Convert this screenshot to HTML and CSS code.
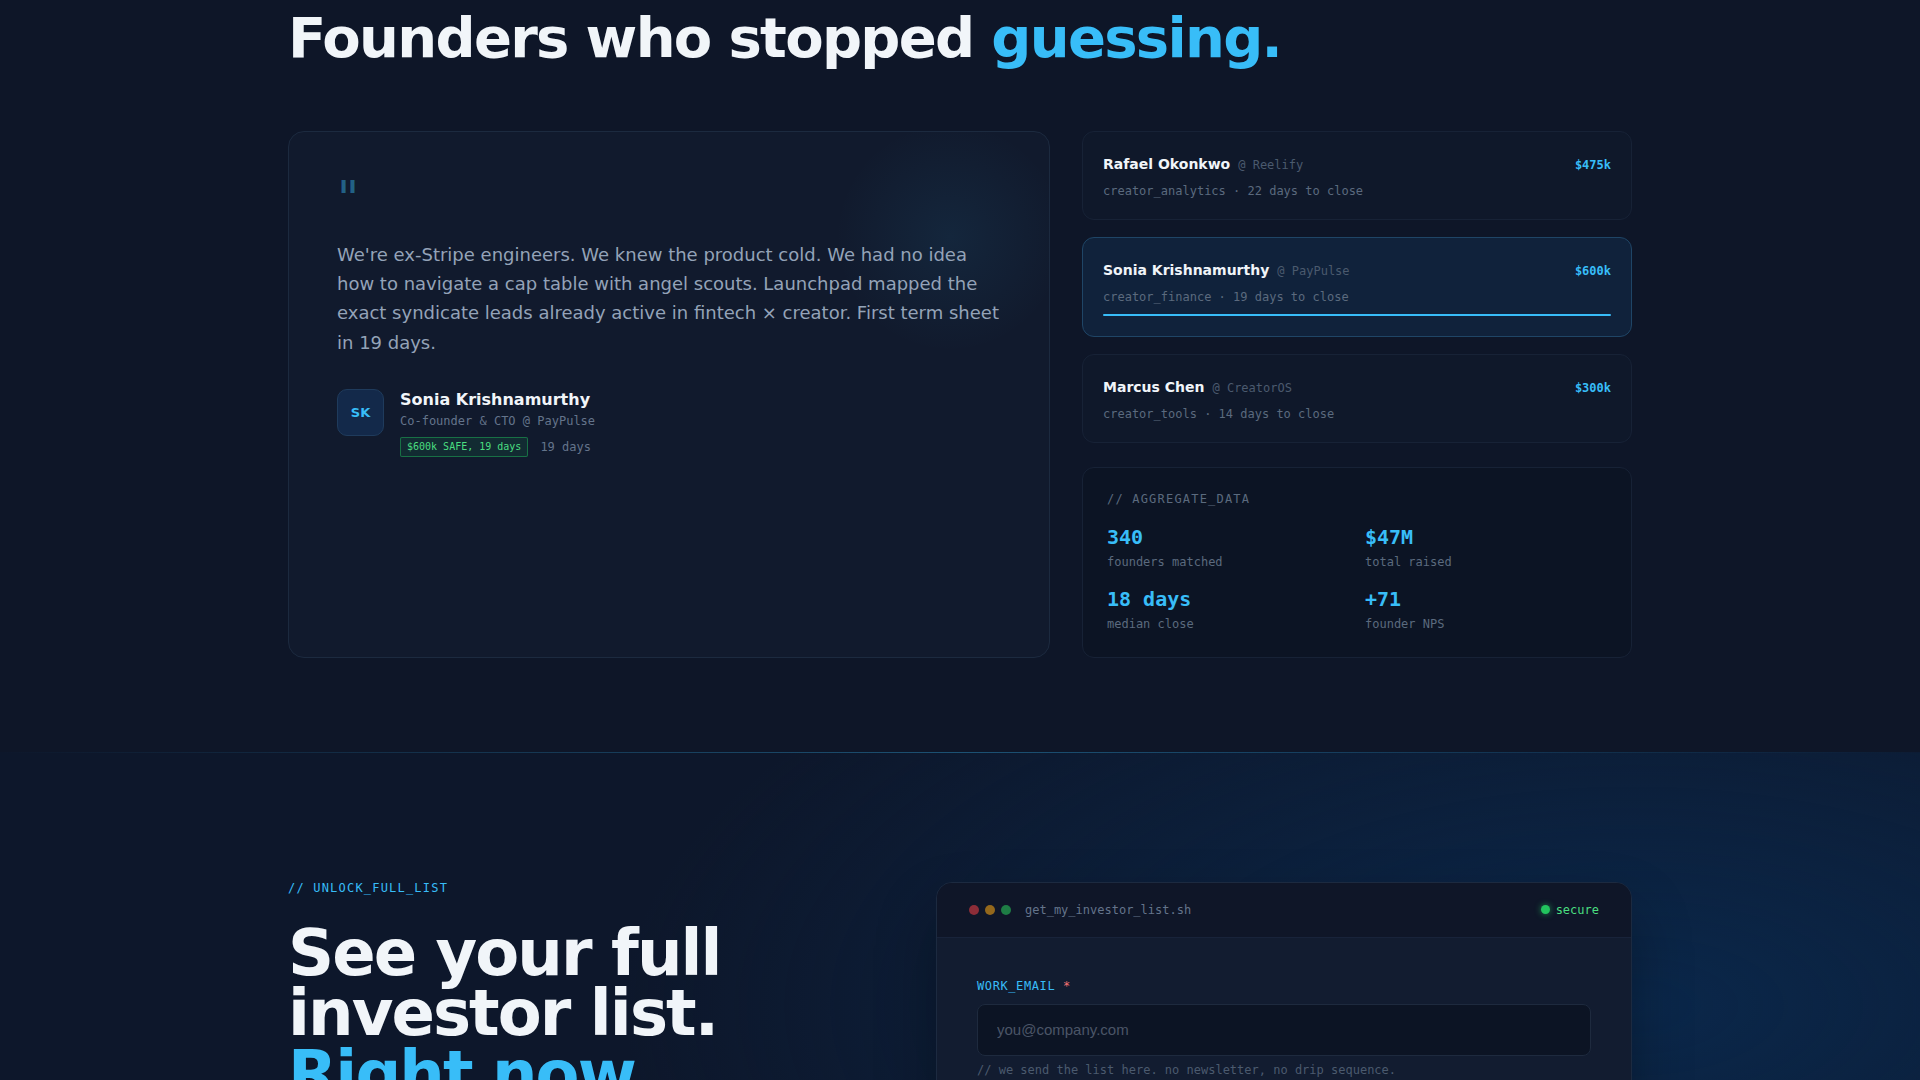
FILE: index.html
```html
<!DOCTYPE html>
<html lang="en">
<head>
<meta charset="utf-8">
<title>Launchpad — Founders who stopped guessing</title>
<link rel="stylesheet" href="styles.css">
</head>
<body>
<section class="proof">
  <div class="wrap">
    <h2 class="title">Founders who stopped <span class="accent">guessing.</span></h2>
    <div class="proof-grid">
      <article class="quote-card">
        <div class="quote-mark">"</div>
        <p class="quote-text">We're ex-Stripe engineers. We knew the product cold. We had no idea how to navigate a cap table with angel scouts. Launchpad mapped the exact syndicate leads already active in fintech × creator. First term sheet in 19 days.</p>
        <div class="author">
          <div class="avatar">SK</div>
          <div class="author-info">
            <div class="author-name">Sonia Krishnamurthy</div>
            <div class="author-role">Co-founder &amp; CTO @ PayPulse</div>
            <div class="author-meta"><span class="badge">$600k SAFE, 19 days</span><span class="meta-days">19 days</span></div>
          </div>
        </div>
      </article>
      <div class="side">
        <div class="deal">
          <div class="deal-top">
            <div class="deal-name">Rafael Okonkwo<span class="deal-co">@ Reelify</span></div>
            <div class="deal-amt">$475k</div>
          </div>
          <div class="deal-sub">creator_analytics · 22 days to close</div>
        </div>
        <div class="deal active">
          <div class="deal-top">
            <div class="deal-name">Sonia Krishnamurthy<span class="deal-co">@ PayPulse</span></div>
            <div class="deal-amt">$600k</div>
          </div>
          <div class="deal-sub">creator_finance · 19 days to close</div>
          <div class="deal-bar"></div>
        </div>
        <div class="deal">
          <div class="deal-top">
            <div class="deal-name">Marcus Chen<span class="deal-co">@ CreatorOS</span></div>
            <div class="deal-amt">$300k</div>
          </div>
          <div class="deal-sub">creator_tools · 14 days to close</div>
        </div>
        <div class="agg">
          <div class="agg-label">// AGGREGATE_DATA</div>
          <div class="agg-grid">
            <div class="stat"><div class="stat-num">340</div><div class="stat-lbl">founders matched</div></div>
            <div class="stat"><div class="stat-num">$47M</div><div class="stat-lbl">total raised</div></div>
            <div class="stat"><div class="stat-num">18 days</div><div class="stat-lbl">median close</div></div>
            <div class="stat"><div class="stat-num">+71</div><div class="stat-lbl">founder NPS</div></div>
          </div>
        </div>
      </div>
    </div>
  </div>
</section>
<section class="cta">
  <div class="wrap cta-grid">
    <div class="cta-left">
      <div class="eyebrow">// UNLOCK_FULL_LIST</div>
      <h2 class="cta-title">See your full<br>investor list.<br><span class="accent">Right now.</span></h2>
    </div>
    <div class="terminal">
      <div class="term-head">
        <span class="dot red"></span><span class="dot yellow"></span><span class="dot green"></span>
        <span class="file">get_my_investor_list.sh</span>
        <span class="secure"><span class="secure-dot"></span>secure</span>
      </div>
      <div class="term-body">
        <label class="field-label" for="email">WORK_EMAIL <span class="req">*</span></label>
        <input class="field-input" id="email" type="email" placeholder="you@company.com">
        <div class="field-help">// we send the list here. no newsletter, no drip sequence.</div>
        <button class="submit" type="button">./get_list --now</button>
      </div>
    </div>
  </div>
</section>
</body>
</html>
```

FILE: styles.css
```css
* { box-sizing: border-box; }

body {
  margin: 0;
  background: #0e1628;
  font-family: "DejaVu Sans", "Noto Sans", sans-serif;
  color: #f1f5f9;
}

.wrap {
  width: 1344px;
  margin: 0 auto;
}

.accent { color: #38bdf8; }

/* ---------- proof section ---------- */
.proof {
  padding: 7px 0 94px;
}

.title {
  margin: 0 0 62px;
  font-size: 56px;
  line-height: 1.1;
  font-weight: 700;
  letter-spacing: -0.03em;
  color: #f1f5f9;
}

.proof-grid {
  display: grid;
  grid-template-columns: 762px 1fr;
  gap: 32px;
}

.quote-card {
  border: 1px solid #1c2a3f;
  border-radius: 16px;
  background:
    radial-gradient(circle at 87% 20%, rgba(56, 189, 248, 0.075), rgba(56, 189, 248, 0) 115px),
    #111a2d;
  padding: 48px;
}

.quote-mark {
  font-size: 48px;
  line-height: 0.75;
  height: 36px;
  color: rgba(56, 189, 248, 0.45);
  font-family: "DejaVu Sans", sans-serif;
}

.quote-text {
  margin: 24px 0 0;
  font-size: 18px;
  line-height: 29.4px;
  color: #94a3b8;
}

.author {
  display: flex;
  align-items: flex-start;
  gap: 16px;
  margin-top: 32px;
}

.avatar {
  width: 47px;
  height: 47px;
  flex: none;
  border-radius: 10px;
  background: #13294a;
  border: 1px solid #1f3b5c;
  color: #38bdf8;
  font-weight: 700;
  font-size: 13px;
  display: flex;
  align-items: center;
  justify-content: center;
}

.author-name {
  font-size: 16px;
  line-height: 22px;
  font-weight: 700;
  color: #f1f5f9;
}

.author-role {
  font-family: "DejaVu Sans Mono", monospace;
  font-size: 12px;
  line-height: 16px;
  color: #64748b;
  margin-top: 2px;
}

.author-meta {
  display: flex;
  align-items: center;
  gap: 12px;
  margin-top: 8px;
}

.badge {
  font-family: "DejaVu Sans Mono", monospace;
  font-size: 10px;
  line-height: 18px;
  padding: 0 6px;
  color: #4ade80;
  background: rgba(34, 197, 94, 0.1);
  border: 1px solid rgba(34, 197, 94, 0.45);
  border-radius: 2px;
}

.meta-days {
  font-family: "DejaVu Sans Mono", monospace;
  font-size: 12px;
  color: #64748b;
}

.side {
  display: flex;
  flex-direction: column;
  gap: 17px;
}

.deal {
  border: 1px solid #172236;
  border-radius: 12px;
  background: #0f182a;
  padding: 20px;
}

.deal.active {
  background: #10223b;
  border-color: #1f4566;
}

.deal-top {
  display: flex;
  justify-content: space-between;
  align-items: baseline;
}

.deal-name {
  font-size: 14px;
  line-height: 24px;
  font-weight: 700;
  color: #f1f5f9;
}

.deal-co {
  font-family: "DejaVu Sans Mono", monospace;
  font-size: 12px;
  font-weight: 400;
  color: #4b5a6e;
  margin-left: 8px;
}

.deal-amt {
  font-family: "DejaVu Sans Mono", monospace;
  font-size: 12px;
  font-weight: 700;
  color: #38bdf8;
}

.deal-sub {
  font-family: "DejaVu Sans Mono", monospace;
  font-size: 12px;
  line-height: 16px;
  color: #5b6a7e;
  margin-top: 6px;
}

.deal-bar {
  height: 2px;
  margin-top: 9px;
  border-radius: 1px;
  background: #38bdf8;
}

.agg {
  margin-top: 7px;
  border: 1px solid #172236;
  border-radius: 12px;
  background: #0c1424;
  padding: 23px 24px 25px;
}

.agg-label {
  font-family: "DejaVu Sans Mono", monospace;
  font-size: 12px;
  line-height: 16px;
  letter-spacing: 0.1em;
  color: #5b6a7e;
  margin-bottom: 18px;
}

.agg-grid {
  display: grid;
  grid-template-columns: 1fr 1fr;
  column-gap: 16px;
  row-gap: 17px;
}

.stat-num {
  font-family: "DejaVu Sans Mono", monospace;
  font-size: 20px;
  line-height: 24px;
  font-weight: 700;
  color: #38bdf8;
}

.stat-lbl {
  font-family: "DejaVu Sans Mono", monospace;
  font-size: 12px;
  line-height: 16px;
  color: #5b6a7e;
  margin-top: 5px;
}

/* ---------- CTA section ---------- */
.cta {
  border-top: 1px solid transparent;
  border-image: linear-gradient(90deg, rgba(56, 189, 248, 0) 0%, rgba(56, 189, 248, 0.35) 50%, rgba(56, 189, 248, 0) 100%) 1;
  background:
    radial-gradient(ellipse 70% 110% at 85% 45%, rgba(10, 40, 76, 0.95) 0%, rgba(10, 40, 76, 0) 75%),
    #0d172b;
  padding: 127px 0 120px;
}

.cta-grid {
  display: grid;
  grid-template-columns: 1fr 696px;
  gap: 64px;
  align-items: start;
}

.eyebrow {
  font-family: "DejaVu Sans Mono", monospace;
  font-size: 12px;
  line-height: 16px;
  letter-spacing: 0.1em;
  color: #38bdf8;
  margin-bottom: 27px;
}

.cta-title {
  margin: 0;
  font-size: 64px;
  line-height: 0.95;
  font-weight: 700;
  letter-spacing: -0.03em;
  color: #f1f5f9;
}

.terminal {
  margin-top: 2px;
  border: 1px solid #1c2a40;
  border-radius: 16px;
  background: #121c30;
  overflow: hidden;
  box-shadow: 0 30px 60px rgba(0, 0, 0, 0.3);
}

.term-head {
  height: 55px;
  display: flex;
  align-items: center;
  padding: 0 32px;
  background: #0f1628;
  border-bottom: 1px solid #18233a;
}

.dot {
  width: 10px;
  height: 10px;
  border-radius: 50%;
  margin-right: 6px;
}

.dot.red { background: #8d2d38; }
.dot.yellow { background: #94681c; }
.dot.green { background: #1e7d45; }

.file {
  margin-left: 8px;
  font-family: "DejaVu Sans Mono", monospace;
  font-size: 12px;
  color: #64748b;
}

.secure {
  margin-left: auto;
  display: flex;
  align-items: center;
  gap: 6px;
  font-family: "DejaVu Sans Mono", monospace;
  font-size: 12px;
  color: #4ade80;
}

.secure-dot {
  width: 9px;
  height: 9px;
  border-radius: 50%;
  background: #22c55e;
  box-shadow: 0 0 6px rgba(34, 197, 94, 0.7);
}

.term-body {
  padding: 40px;
}

.field-label {
  display: block;
  font-family: "DejaVu Sans Mono", monospace;
  font-size: 12px;
  line-height: 16px;
  letter-spacing: 0.05em;
  color: #38bdf8;
  margin-bottom: 10px;
}

.req { color: #f87171; }

.field-input {
  display: block;
  width: 100%;
  height: 52px;
  background: #0c1424;
  border: 1px solid #1e2a3e;
  border-radius: 8px;
  padding: 0 19px;
  font-family: "Liberation Sans", Arial, sans-serif;
  font-size: 15px;
  color: #e2e8f0;
  outline: none;
}

.field-input::placeholder { color: #4b5567; }

.field-help {
  font-family: "DejaVu Sans Mono", monospace;
  font-size: 12px;
  line-height: 16px;
  color: #4b5a6e;
  margin-top: 6px;
}

.submit {
  margin-top: 24px;
  width: 100%;
  height: 52px;
  border: none;
  border-radius: 8px;
  background: #38bdf8;
  color: #0b1220;
  font-family: "DejaVu Sans Mono", monospace;
  font-size: 14px;
  font-weight: 700;
}
```
